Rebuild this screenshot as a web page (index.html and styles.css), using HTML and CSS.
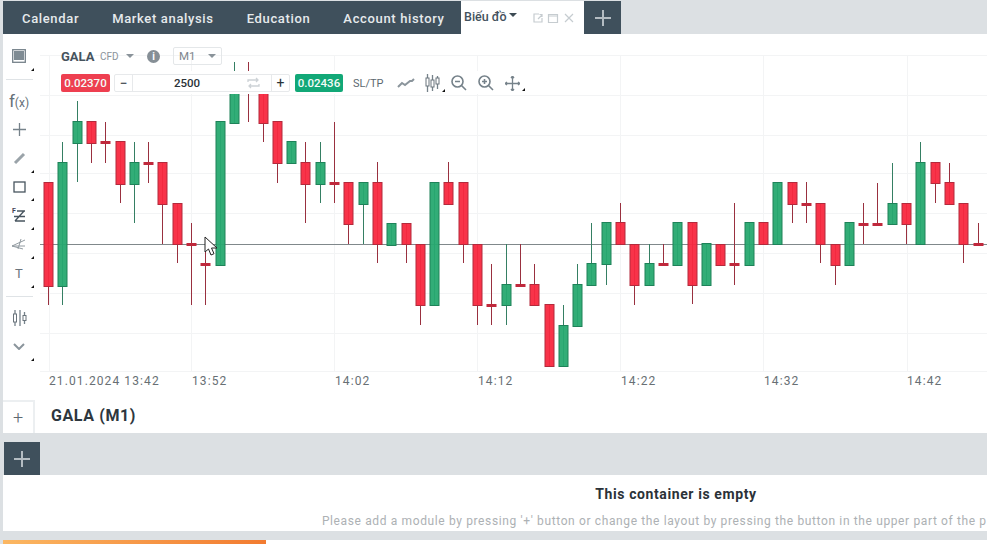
FILE: index.html
```html
<!DOCTYPE html>
<html lang="en">
<head>
    <meta charset="UTF-8">
    <meta name="viewport" content="width=device-width, initial-scale=1.0">
    <title>GALA (M1)</title>
    <link rel="stylesheet" href="styles.css">
</head>
<body>
    <!-- Top tabs -->
    <div class="tabs">
        <div class="tab-group">
            <a class="tab">Calendar</a>
            <a class="tab">Market analysis</a>
            <a class="tab">Education</a>
            <a class="tab">Account history</a>
        </div>
        <div class="tab-active">
            <span class="tab-active-name">Biếu đồ</span>
            <span class="caret caret-dark"></span>
            <div class="tab-actions">
                <svg width="12" height="12" viewBox="0 0 12 12"><path d="M7 2H2v8h8V6M6 7l4-4M7.5 2.5H10V5" /></svg>
                <svg width="12" height="12" viewBox="0 0 12 12"><path d="M1.5 2.5h9v8h-9zM1.5 4h9" /></svg>
                <svg width="12" height="12" viewBox="0 0 12 12"><path d="M2 2l8 8M10 2l-8 8" /></svg>
            </div>
        </div>
        <button class="add-btn add-btn-top"><svg width="16" height="16" viewBox="0 0 16 16"><path d="M8 0v16M0 8h16" /></svg></button>
    </div>

    <div class="panel">
        <div class="chart-area">
            <!-- Drawing tools -->
            <div class="tools">
                <div class="tool corner"><svg width="14" height="14" viewBox="0 0 14 14"><rect class="ic-fill" x="2" y="2" width="10" height="9" /><rect class="ic" x="0.7" y="0.7" width="12.6" height="12.6" /></svg></div>
                <div class="tool-sep"></div>
                <div class="tool"><span class="fx">f<small>(x)</small></span></div>
                <div class="tool"><svg width="13" height="13" viewBox="0 0 13 13"><path class="ic" d="M6.5 0v13M0 6.5h13" /></svg></div>
                <div class="tool corner"><svg width="13" height="13" viewBox="0 0 13 13"><path class="ic ic-pencil" d="M2 11L11 2" /></svg></div>
                <div class="tool corner"><svg width="13" height="12" viewBox="0 0 13 12"><rect class="ic ic-dark" x="1" y="1" width="11" height="10" /></svg></div>
                <div class="tool corner"><span class="fib-f">F</span><svg width="14" height="14" viewBox="0 0 14 14"><path class="ic ic-dark" d="M5 2h8M2 7.500h11M3 12h10M12 2L3 12" /></svg></div>
                <div class="tool corner"><svg width="14" height="12" viewBox="0 0 14 12"><path class="ic ic-faint" d="M0 8L13 2M0 8l13 0M0 8L11 11M9 1l-3 10" /></svg></div>
                <div class="tool corner"><span class="tool-t">T</span></div>
                <div class="tool-sep"></div>
                <div class="tool"><svg width="15" height="16" viewBox="0 0 15 16"><path class="ic" d="M3 0v16M8 0v16M12.5 2v12" /><rect class="ic ic-white" x="1.5" y="4" width="3" height="8" /><rect class="ic ic-white" x="11" y="5.5" width="3" height="5" /></svg></div>
                <div class="tool corner"><svg width="12" height="7" viewBox="0 0 12 7"><path class="ic ic-thick" d="M1 1l5 5 5-5" /></svg></div>
            </div>

            <!-- Candles are added by chart.js -->
            <div class="chart">
                <svg id="candles" class="candles" width="947" height="366" viewBox="40 34 947 366"></svg>

                <div class="chart-bar">
                    <div class="bar-row">
                        <span class="symbol">GALA</span>
                        <span class="symbol-type">CFD</span>
                        <span class="caret caret-grey caret-symbol"></span>
                        <span class="info">i</span>
                        <div class="period"><span>M1</span><span class="caret caret-grey"></span></div>
                    </div>
                    <div class="bar-row bar-row-order">
                        <span class="price price-sell">0.02370</span>
                        <div class="qty">
                            <span class="qty-btn">−</span>
                            <span class="qty-value">2500</span>
                            <svg class="qty-swap" width="13" height="12" viewBox="0 0 13 12"><path class="ic ic-light" d="M1 5V3h10M9 1l2 2-2 2M12 7v2H2M4 7L2 9l2 2" /></svg>
                            <span class="qty-btn qty-btn-plus">+</span>
                        </div>
                        <span class="price price-buy">0.02436</span>
                        <span class="sltp">SL/TP</span>
                        <span class="bar-icon"><svg width="18" height="10" viewBox="0 0 18 10"><path class="ic ic-thick" d="M1 9l4-4 3 2 5-4 2 0 2-2" /></svg></span>
                        <span class="bar-icon corner-small"><svg width="15" height="18" viewBox="0 0 15 18"><path class="ic" d="M2.5 0v18M7.5 1v16M12.5 2v13" /><rect class="ic ic-white" x="1" y="4" width="3" height="8" /><rect class="ic ic-white" x="6" y="6" width="3" height="7" /><rect class="ic ic-white" x="11" y="4" width="3" height="6" /></svg></span>
                        <span class="bar-icon"><svg width="16" height="16" viewBox="0 0 16 16"><circle class="ic ic-mid" cx="6.5" cy="6.5" r="5.5" /><path class="ic ic-mid" d="M4 6.5h5M10.5 10.5L15 15" /></svg></span>
                        <span class="bar-icon"><svg width="16" height="16" viewBox="0 0 16 16"><circle class="ic ic-mid" cx="6.5" cy="6.5" r="5.5" /><path class="ic ic-mid" d="M4 6.5h5M6.5 4v5M10.5 10.5L15 15" /></svg></span>
                        <span class="bar-icon corner-small"><svg width="15" height="15" viewBox="0 0 15 15"><path class="ic" d="M7.5 0v15M0 7.5h15M6 2l1.5-2L9 2M6 13l1.500 2L9 13M2 6L0 7.5 2 9M13 6l2 1.5L13 9" /></svg></span>
                    </div>
                </div>

                <svg class="cursor" width="14" height="20" viewBox="0 0 14 20"><path d="M1 1v15l3.500-3 2.500 6 3-1.300-2.500-5.700H13z" /></svg>
            </div>
        </div>

        <div class="title-row">
            <button class="title-add">+</button>
            <span class="title">GALA (M1)</span>
        </div>
    </div>

    <!-- Second container -->
    <div class="band">
        <button class="add-btn"><svg width="16" height="16" viewBox="0 0 16 16"><path d="M8 0v16M0 8h16" /></svg></button>
    </div>
    <div class="empty">
        <div class="empty-inner">
            <div class="empty-title">This container is empty</div>
            <div class="empty-text">Please add a module by pressing '+' button or change the layout by pressing the button in the upper part of the platform</div>
        </div>
    </div>
    <div class="gap"></div>
    <div class="progress"><div class="progress-bar"></div></div>

    <script src="chart.js"></script>
</body>
</html>
```
FILE: styles.css
```css
* {
    box-sizing: border-box;
}
html, body {
    margin: 0;
    height: 544px;
    overflow: hidden;
}
body {
    padding-left: 3px;
    background-color: #dce0e3;
    font-family: Roboto, "Liberation Sans", sans-serif;
    color: #3d4a54;
}
button {
    border: 0;
    padding: 0;
    font-family: inherit;
}

/* tabs */
.tabs {
    display: flex;
    height: 34px;
    padding-top: 1px;
}
.tab-group {
    display: flex;
    align-items: center;
    width: 458px;
    padding: 1px 0 0 19px;
    gap: 33px;
    background-color: #3f505c;
}
.tab {
    font-size: 13px;
    font-weight: 500;
    letter-spacing: 0.65px;
    color: #e6eaec;
    white-space: nowrap;
}
.tab-active {
    display: flex;
    align-items: center;
    width: 123px;
    padding-left: 3px;
    background-color: #fff;
}
.tab-active-name {
    font-size: 12.5px;
    font-weight: 500;
    color: #44525d;
    margin-right: 2px;
    margin-bottom: 2px;
}
.tab-actions {
    display: flex;
    gap: 3.5px;
    margin-left: 15px;
}
.tab-actions svg {
    fill: none;
    stroke: #c6ccd0;
    stroke-width: 1.2;
}
.caret {
    display: inline-block;
    width: 0;
    height: 0;
    border-left: 4.5px solid transparent;
    border-right: 4.5px solid transparent;
    border-top: 4.5px solid #8a939a;
}
.caret-dark {
    border-top-color: #3d4a54;
    margin-bottom: 5px;
}
.add-btn {
    display: flex;
    align-items: center;
    justify-content: center;
    width: 36px;
    height: 33px;
    background-color: #3f505c;
}
.add-btn svg {
    stroke: #b4bcc2;
    stroke-width: 2;
}
.add-btn-top {
    width: 37px;
}

/* main panel */
.panel {
    height: 399px;
    background-color: #fff;
}
.chart-area {
    display: flex;
    height: 366px;
}
.tools {
    width: 37px;
    flex-shrink: 0;
    padding-top: 8px;
}
.tool {
    position: relative;
    display: flex;
    align-items: center;
    justify-content: center;
    width: 32px;
    height: 28.7px;
}
.corner::after {
    content: "";
    position: absolute;
    right: 1px;
    bottom: 0;
    border-left: 3px solid transparent;
    border-bottom: 3px solid #111;
}
.tool-sep {
    width: 27px;
    height: 1px;
    margin: 8px 0 7px 3px;
    background-color: #dfe3e6;
}
.fx {
    font-size: 17px;
    color: #667078;
}
.fx small {
    font-size: 12px;
}
.fib-f {
    position: absolute;
    left: 9px;
    top: 6px;
    font-size: 7px;
    font-weight: 700;
    color: #445;
}
.tool-t {
    font-size: 13px;
    color: #6a747c;
}
.ic {
    fill: none;
    stroke: #76828a;
    stroke-width: 1.3;
}
.ic-fill {
    fill: #7f8b93;
}
.ic-thick {
    stroke-width: 2;
    stroke: #8b959c;
}
.ic-pencil {
    stroke-width: 3;
    stroke: #9aa3a9;
}
.ic-dark {
    stroke: #48555f;
    stroke-width: 1.3;
}
.ic-faint {
    stroke: #929ba1;
    stroke-width: 1;
}
.ic-white {
    fill: #fff;
    stroke: #6a747c;
    stroke-width: 1;
}
.ic-light {
    stroke: #cdd2d6;
}
.ic-mid {
    stroke: #76828a;
    stroke-width: 1.6;
}

/* chart */
.chart {
    position: relative;
    flex: 1;
    min-width: 0;
}
.candles {
    display: block;
}
.grid-line {
    stroke: #f3f4f5;
    stroke-width: 1;
}
.price-line {
    stroke: #80888b;
    stroke-width: 1;
}
.axis-label {
    font-size: 12px;
    letter-spacing: 1.1px;
    fill: #686f74;
}
.body-up {
    fill: #27a970;
    stroke: #1e8259;
    fill-opacity: 0.95;
}
.body-down {
    fill: #f8283f;
    stroke: #b32a3c;
    fill-opacity: 0.95;
}
.wick-up {
    stroke: #357f63;
}
.wick-down {
    stroke: #99303f;
}
.doji {
    fill: #c0283c;
}
.cursor {
    position: absolute;
    left: 164px;
    top: 202px;
    fill: #fff;
    stroke: #222;
    stroke-width: 1;
}
.chart-bar {
    position: absolute;
    left: 21px;
    top: 13px;
}
.bar-row {
    display: flex;
    align-items: center;
    height: 18px;
}
.bar-row-order {
    height: 23px;
    margin-top: 6px;
    padding: 3px 0 2px;
    background-color: #fff;
}
.symbol {
    font-size: 13px;
    font-weight: 700;
    color: #46535d;
    width: 39px;
}
.symbol-type {
    font-size: 10px;
    color: #8a939a;
    width: 26px;
}
.caret-symbol {
    margin-right: 13px;
}
.info {
    display: flex;
    align-items: center;
    justify-content: center;
    width: 13px;
    height: 13px;
    margin-right: 13px;
    border-radius: 50%;
    background-color: #868f96;
    color: #fff;
    font-size: 10px;
    font-weight: 700;
}
.period {
    display: flex;
    align-items: center;
    justify-content: space-between;
    width: 49px;
    height: 18px;
    padding: 0 5px;
    border: 1px solid #e4e7e9;
    border-radius: 2px;
    font-size: 11.5px;
    color: #7d868d;
}
.price {
    display: flex;
    align-items: center;
    justify-content: center;
    height: 18px;
    border-radius: 2px;
    color: #f4fbf8;
    font-size: 11.5px;
    font-weight: 500;
}
.price-sell {
    width: 49px;
    background-color: #ee3f50;
}
.price-buy {
    width: 48px;
    margin-left: 5px;
    background-color: #12a877;
}
.qty {
    display: flex;
    align-items: center;
    width: 176px;
    height: 18px;
    margin-left: 4px;
    border: 1px solid #e7e9eb;
    border-radius: 2px;
}
.qty-btn {
    width: 18px;
    text-align: center;
    font-size: 14px;
    line-height: 16px;
    color: #2a3238;
    border-right: 1px solid #e7e9eb;
}
.qty-btn-plus {
    border-right: 0;
    border-left: 1px solid #e7e9eb;
}
.qty-value {
    flex: 1;
    text-align: center;
    padding-right: 6px;
    font-size: 11.5px;
    font-weight: 500;
    color: #2a3238;
}
.qty-swap {
    margin-right: 11px;
}
.sltp {
    width: 31px;
    margin: 0 9px 0 10px;
    font-size: 11px;
    color: #5d6870;
    white-space: nowrap;
}
.bar-icon {
    position: relative;
    display: flex;
    align-items: center;
    justify-content: center;
    width: 26.5px;
}
.corner-small::after {
    content: "";
    position: absolute;
    right: 1px;
    bottom: 0;
    border-left: 3px solid transparent;
    border-bottom: 3px solid #111;
}

/* title row */
.title-row {
    display: flex;
    align-items: center;
    height: 33px;
}
.title-add {
    width: 32px;
    height: 33px;
    background-color: #fff;
    border-top: 2px solid #eceff1;
    border-right: 2px solid #eceff1;
    font-size: 18px;
    font-weight: 300;
    color: #5d6870;
}
.title {
    margin: 0 0 2px 16px;
    font-size: 16px;
    font-weight: 700;
    letter-spacing: 0.6px;
    color: #2e373e;
}

/* empty container */
.band {
    display: flex;
    align-items: flex-end;
    height: 42px;
    padding-left: 1px;
}
.empty {
    height: 56px;
    background-color: #fff;
    overflow: hidden;
}
.empty-inner {
    width: 1346px;
    text-align: center;
}
.empty-title {
    margin-top: 11px;
    font-size: 14px;
    font-weight: 700;
    line-height: 16px;
    letter-spacing: 0.6px;
    color: #2b3238;
}
.empty-text {
    margin-top: 12px;
    font-size: 12px;
    line-height: 14px;
    letter-spacing: 0.63px;
    color: #adb1b4;
    white-space: nowrap;
}
.gap {
    height: 9px;
}
.progress {
    height: 4px;
    background-color: #fff;
}
.progress-bar {
    width: 263px;
    height: 4px;
    background: linear-gradient(to right, #fbb762, #f27b30);
}
```
FILE: chart.js
```js
// color, body top, body bottom, wick top, wick bottom
const candles = [
    ['r',182,286,182,305], ['g',162,286,142,305], ['g',121,143,101,182], ['r',121,143,121,163],
    ['r',142,142,122,163], ['r',141,184,141,203], ['g',162,184,142,223], ['r',163,163,142,183],
    ['r',162,204,162,244], ['r',203,244,203,263], ['r',244,244,223,305], ['r',264,264,244,305],
    ['g',121,265,121,265], ['g',82,123,62,123], ['r',82,82,62,122], ['r',82,123,82,142],
    ['r',121,163,121,183], ['g',141,163,141,163], ['r',162,184,142,223], ['g',162,184,142,203],
    ['r',183,183,122,203], ['r',182,224,182,244], ['g',182,204,182,244], ['r',182,244,162,263],
    ['g',223,245,223,245], ['r',223,244,223,263], ['r',244,305,244,325], ['g',182,305,182,305],
    ['r',182,204,162,204], ['r',182,244,182,263], ['r',244,305,244,325], ['r',305,305,264,325],
    ['g',284,305,244,325], ['r',285,285,244,285], ['r',284,305,264,305], ['r',304,366,304,366],
    ['g',325,366,305,366], ['g',284,326,264,326], ['g',263,285,223,285], ['g',222,264,222,285],
    ['r',222,244,203,244], ['r',244,285,244,305], ['g',263,285,244,285], ['r',264,264,244,264],
    ['g',222,265,222,265], ['r',222,285,222,304], ['g',243,285,243,285], ['r',244,265,244,265],
    ['r',264,264,203,285], ['g',222,265,222,265], ['r',222,244,222,244], ['g',182,244,182,244],
    ['r',182,204,182,223], ['r',204,204,182,223], ['r',203,244,203,263], ['r',244,265,244,285],
    ['g',222,265,222,265], ['r',224,224,203,244], ['r',224,224,183,224], ['g',203,224,163,224],
    ['r',203,224,203,244], ['g',162,244,142,244], ['r',162,183,162,203], ['r',182,204,163,204],
    ['r',203,244,203,263], ['r',244,244,223,244]
];
const gridX = [49, 191, 334, 477, 620, 763, 907];
const gridY = [55, 95, 135, 173, 213, 253, 293, 333, 371];
const labels = [
    [49, '21.01.2024 13:42'], [192, '13:52'], [335, '14:02'], [478, '14:12'],
    [621, '14:22'], [764, '14:32'], [907, '14:42']
];

const svg = document.getElementById('candles');
let html = '';

gridX.forEach(function(x) {
    html += `<line class="grid-line" x1="${x + 0.5}" y1="55" x2="${x + 0.5}" y2="371"></line>`;
});
gridY.forEach(function(y) {
    html += `<line class="grid-line" x1="40" y1="${y + 0.5}" x2="987" y2="${y + 0.5}"></line>`;
});
html += '<line class="price-line" x1="40" y1="244.5" x2="987" y2="244.5"></line>';

candles.forEach(function(c, i) {
    const x = Math.floor(48.5 + 14.3 * i);
    const name = c[0] === 'g' ? 'up' : 'down';
    html += `<line class="wick-${name}" x1="${x + 0.5}" y1="${c[3]}" x2="${x + 0.5}" y2="${c[4]}"></line>`;
    if (c[1] === c[2]) {
        html += `<rect class="doji" x="${x - 4.5}" y="${c[1] - 1}" width="10" height="3"></rect>`;
    } else {
        html += `<rect class="body-${name}" x="${x - 4}" y="${c[1] + 0.5}" width="9" height="${c[2] - c[1]}"></rect>`;
    }
});

labels.forEach(function(l) {
    html += `<text class="axis-label" x="${l[0]}" y="385">${l[1]}</text>`;
});

svg.innerHTML = html;
```
